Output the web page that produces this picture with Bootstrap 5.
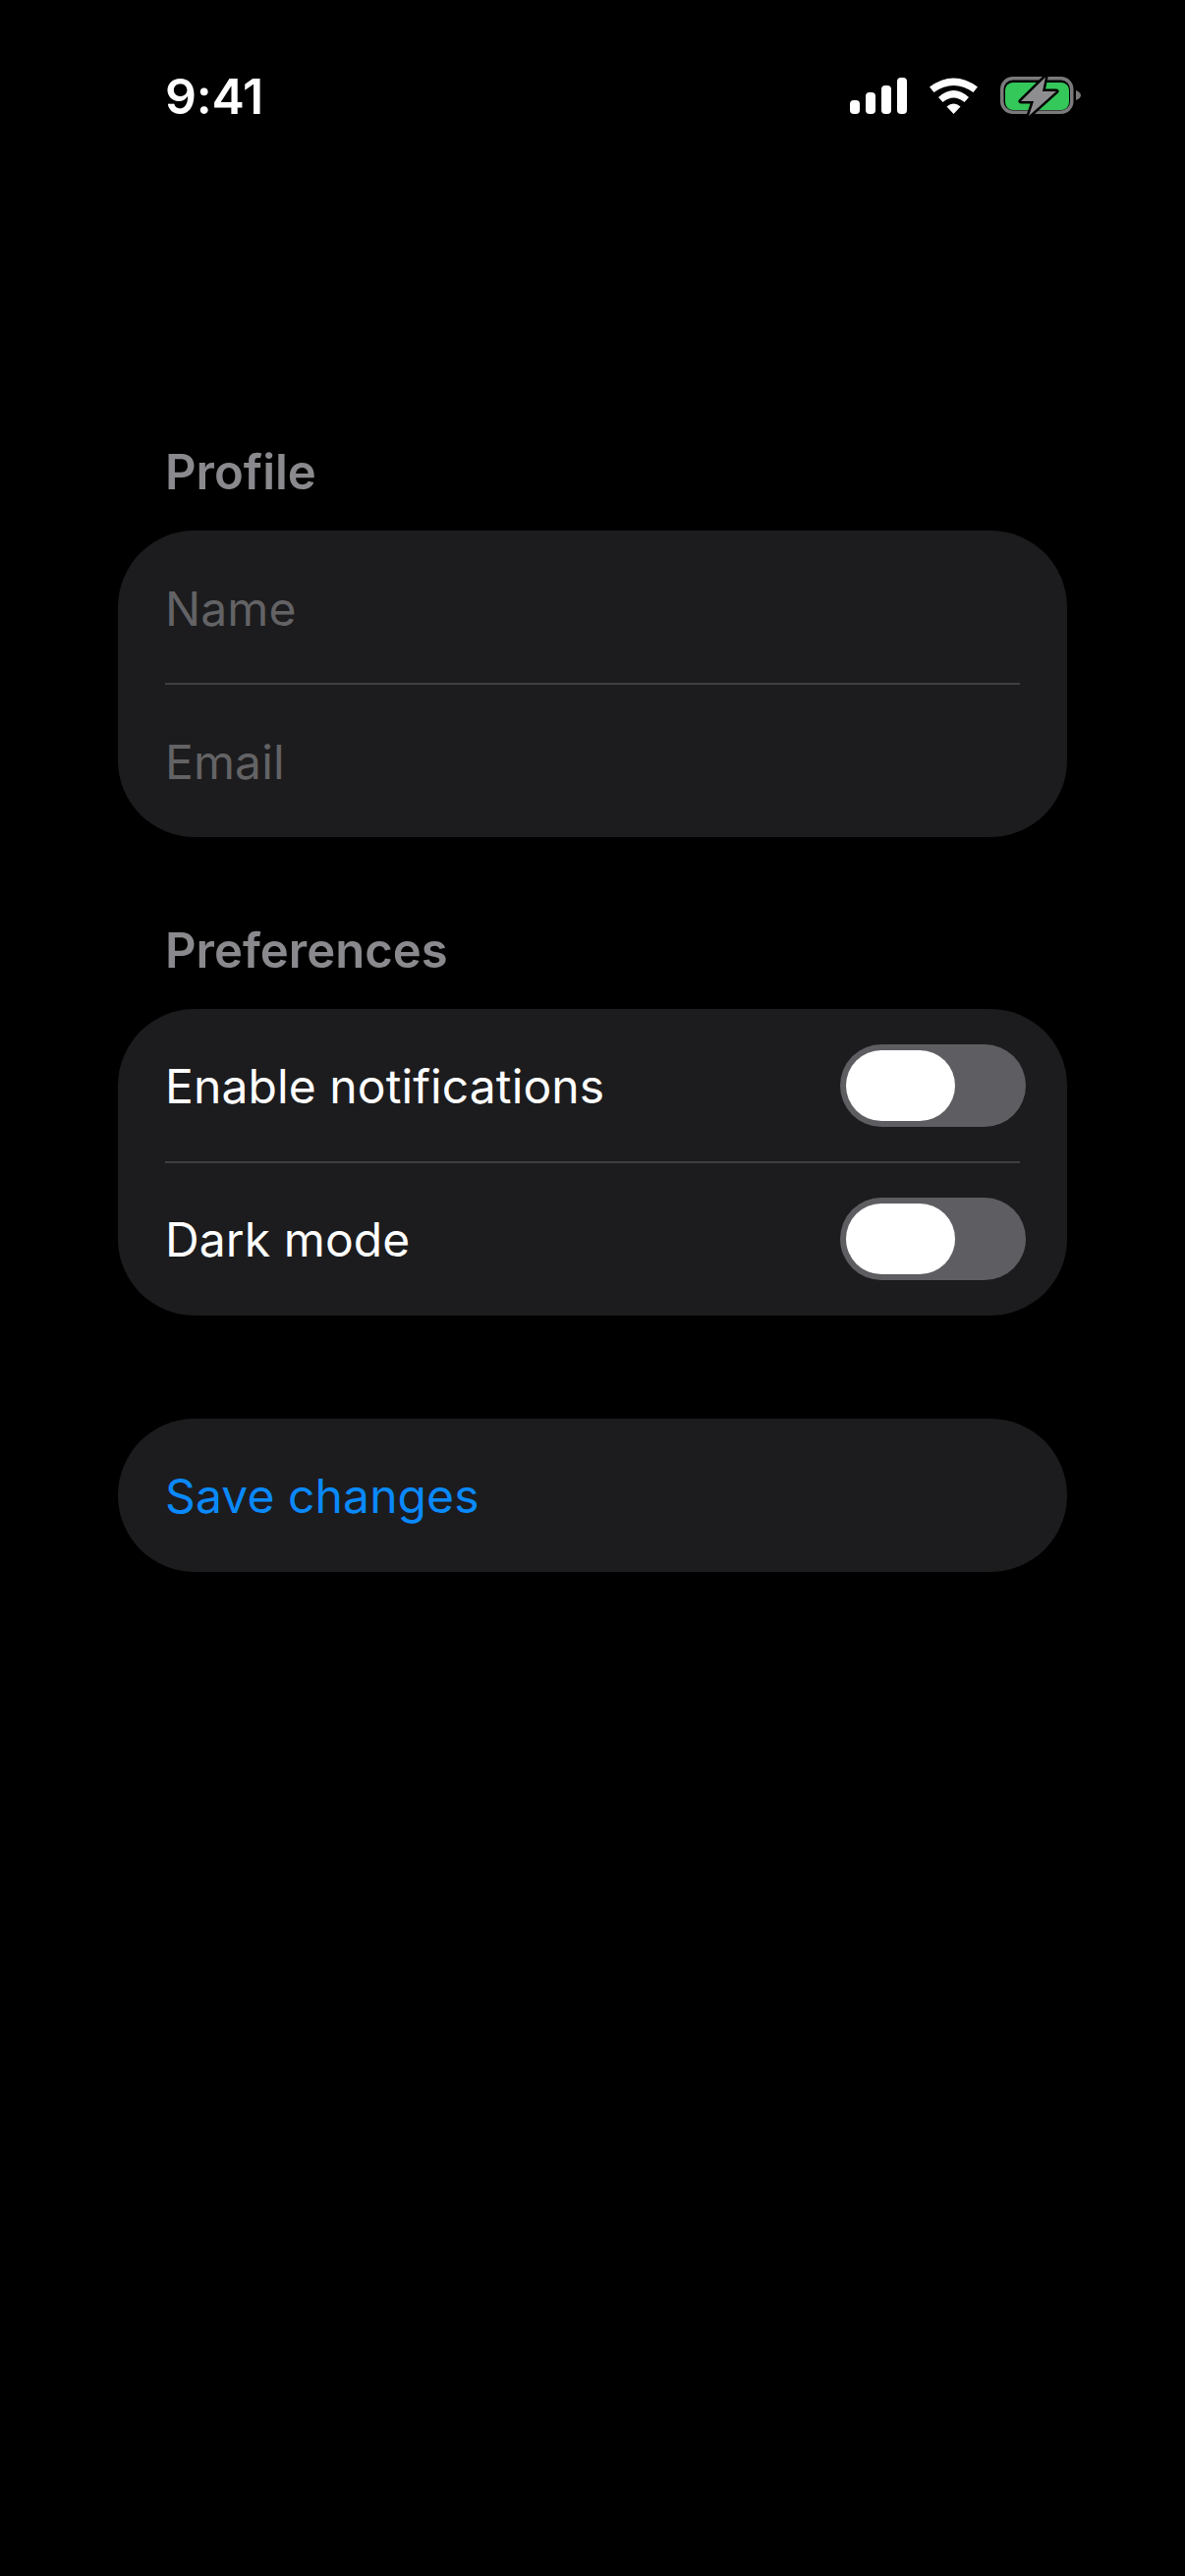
<!DOCTYPE html>
<html lang="en">
<head>
<meta charset="utf-8">
<title>Settings</title>
<link href="https://cdn.jsdelivr.net/npm/bootstrap@5.3.0/dist/css/bootstrap.min.css" rel="stylesheet">
<style>
html, body { background: #000; }
body { font-family: Inter, "Liberation Sans", sans-serif; min-height: 2622px; color: #fff; }
.status-strip { padding: 73px 106px 0 168px; height: 168px; }
.clock-txt { font-family: Inter, sans-serif; font-weight: 600; font-size: 50px; line-height: 50px; letter-spacing: -.2px; }
.status-icons { gap: 23px; margin-top: 5px; }
.page-body { padding: 0 120px; margin-top: 284px; }
.group-label { font-size: 49px; line-height: 58px; font-weight: 600; color: #8a8a8e; padding-left: 48px; margin: 0 0 30px; letter-spacing: 0; }
.group-card { background: #1c1c1e; border-radius: 78px; overflow: hidden; border: 0; }
.group-card .list-group-item { background: transparent; border: 0; height: 156px; padding: 0 42px 0 48px; color: #fff; font-size: 48px; line-height: 58px; letter-spacing: .1px; }
.row-txt { padding-top: 2px; }
.group-card .hint-txt .row-txt { padding-top: 4px; }
.group-rule { height: 2px; margin: -1px 48px; background: #3f3f42; position: relative; z-index: 1; }
.group-card .hint-txt { color: #636366; }
.group-card .action-txt { color: #0a89fb; }
.gap-sec { margin-bottom: 87px; }
.gap-sec-2 { margin-bottom: 105px; }
.sw-track { width: 189px; height: 84px; border-radius: 42px; background: #5e5e62; padding: 6px; }
.sw-knob { width: 111px; height: 72px; border-radius: 36px; background: #fff; }
</style>
</head>
<body>
<div class="status-strip d-flex justify-content-between align-items-start">
  <div class="clock-txt">9:41</div>
  <div class="status-icons d-flex align-items-start">
    <svg width="58" height="38" viewBox="0 0 58 38" fill="#fff"><rect x="0" y="24" width="10" height="14" rx="4"/><rect x="16" y="16" width="10" height="22" rx="4"/><rect x="32" y="9" width="10" height="29" rx="4"/><rect x="48" y="1" width="10" height="37" rx="4"/></svg>
    <svg width="49" height="38" viewBox="0 0 49 38" fill="#fff"><path d="M0 10.500Q24.500-7.500 49 10.500L44.500 16Q24.500 2 4.500 16Z"/><path d="M9 21Q24.500 7 40 21L35.500 26Q24.500 17 13.500 26Z"/><path d="M17.500 30.500Q24.500 24.500 31.500 30.500L24.500 38Z"/></svg>
    <svg width="82" height="40" viewBox="0 0 82 40"><rect x="1.750" y="1.750" width="71" height="34.500" rx="11" fill="none" stroke="#7a7a7c" stroke-width="3.500"/><path d="M77 14c3 1 5 3 5 5s-2 4-5 5Z" fill="#7a7a7c"/><rect x="5" y="6" width="65" height="28" rx="8" fill="#34c759"/><path d="M46 .5 21 25H34L29 40 57 15H43Z" fill="#8e8e90" stroke="#000" stroke-width="5" stroke-linejoin="round" paint-order="stroke"/></svg>
  </div>
</div>
<main class="page-body">
  <section class="gap-sec">
    <h2 class="group-label">Profile</h2>
    <div class="list-group group-card">
      <div class="list-group-item d-flex align-items-center hint-txt"><span class="row-txt">Name</span></div>
      <div class="group-rule"></div>
      <div class="list-group-item d-flex align-items-center hint-txt"><span class="row-txt">Email</span></div>
    </div>
  </section>
  <section class="gap-sec-2">
    <h2 class="group-label">Preferences</h2>
    <div class="list-group group-card">
      <div class="list-group-item d-flex align-items-center justify-content-between"><span class="row-txt">Enable notifications</span><div class="sw-track"><div class="sw-knob"></div></div></div>
      <div class="group-rule"></div>
      <div class="list-group-item d-flex align-items-center justify-content-between"><span class="row-txt">Dark mode</span><div class="sw-track"><div class="sw-knob"></div></div></div>
    </div>
  </section>
  <div class="list-group group-card">
    <button type="button" class="list-group-item list-group-item-action d-flex align-items-center action-txt"><span class="row-txt">Save changes</span></button>
  </div>
</main>
<script src="https://cdn.jsdelivr.net/npm/bootstrap@5.3.0/dist/js/bootstrap.bundle.min.js"></script>
</body>
</html>
